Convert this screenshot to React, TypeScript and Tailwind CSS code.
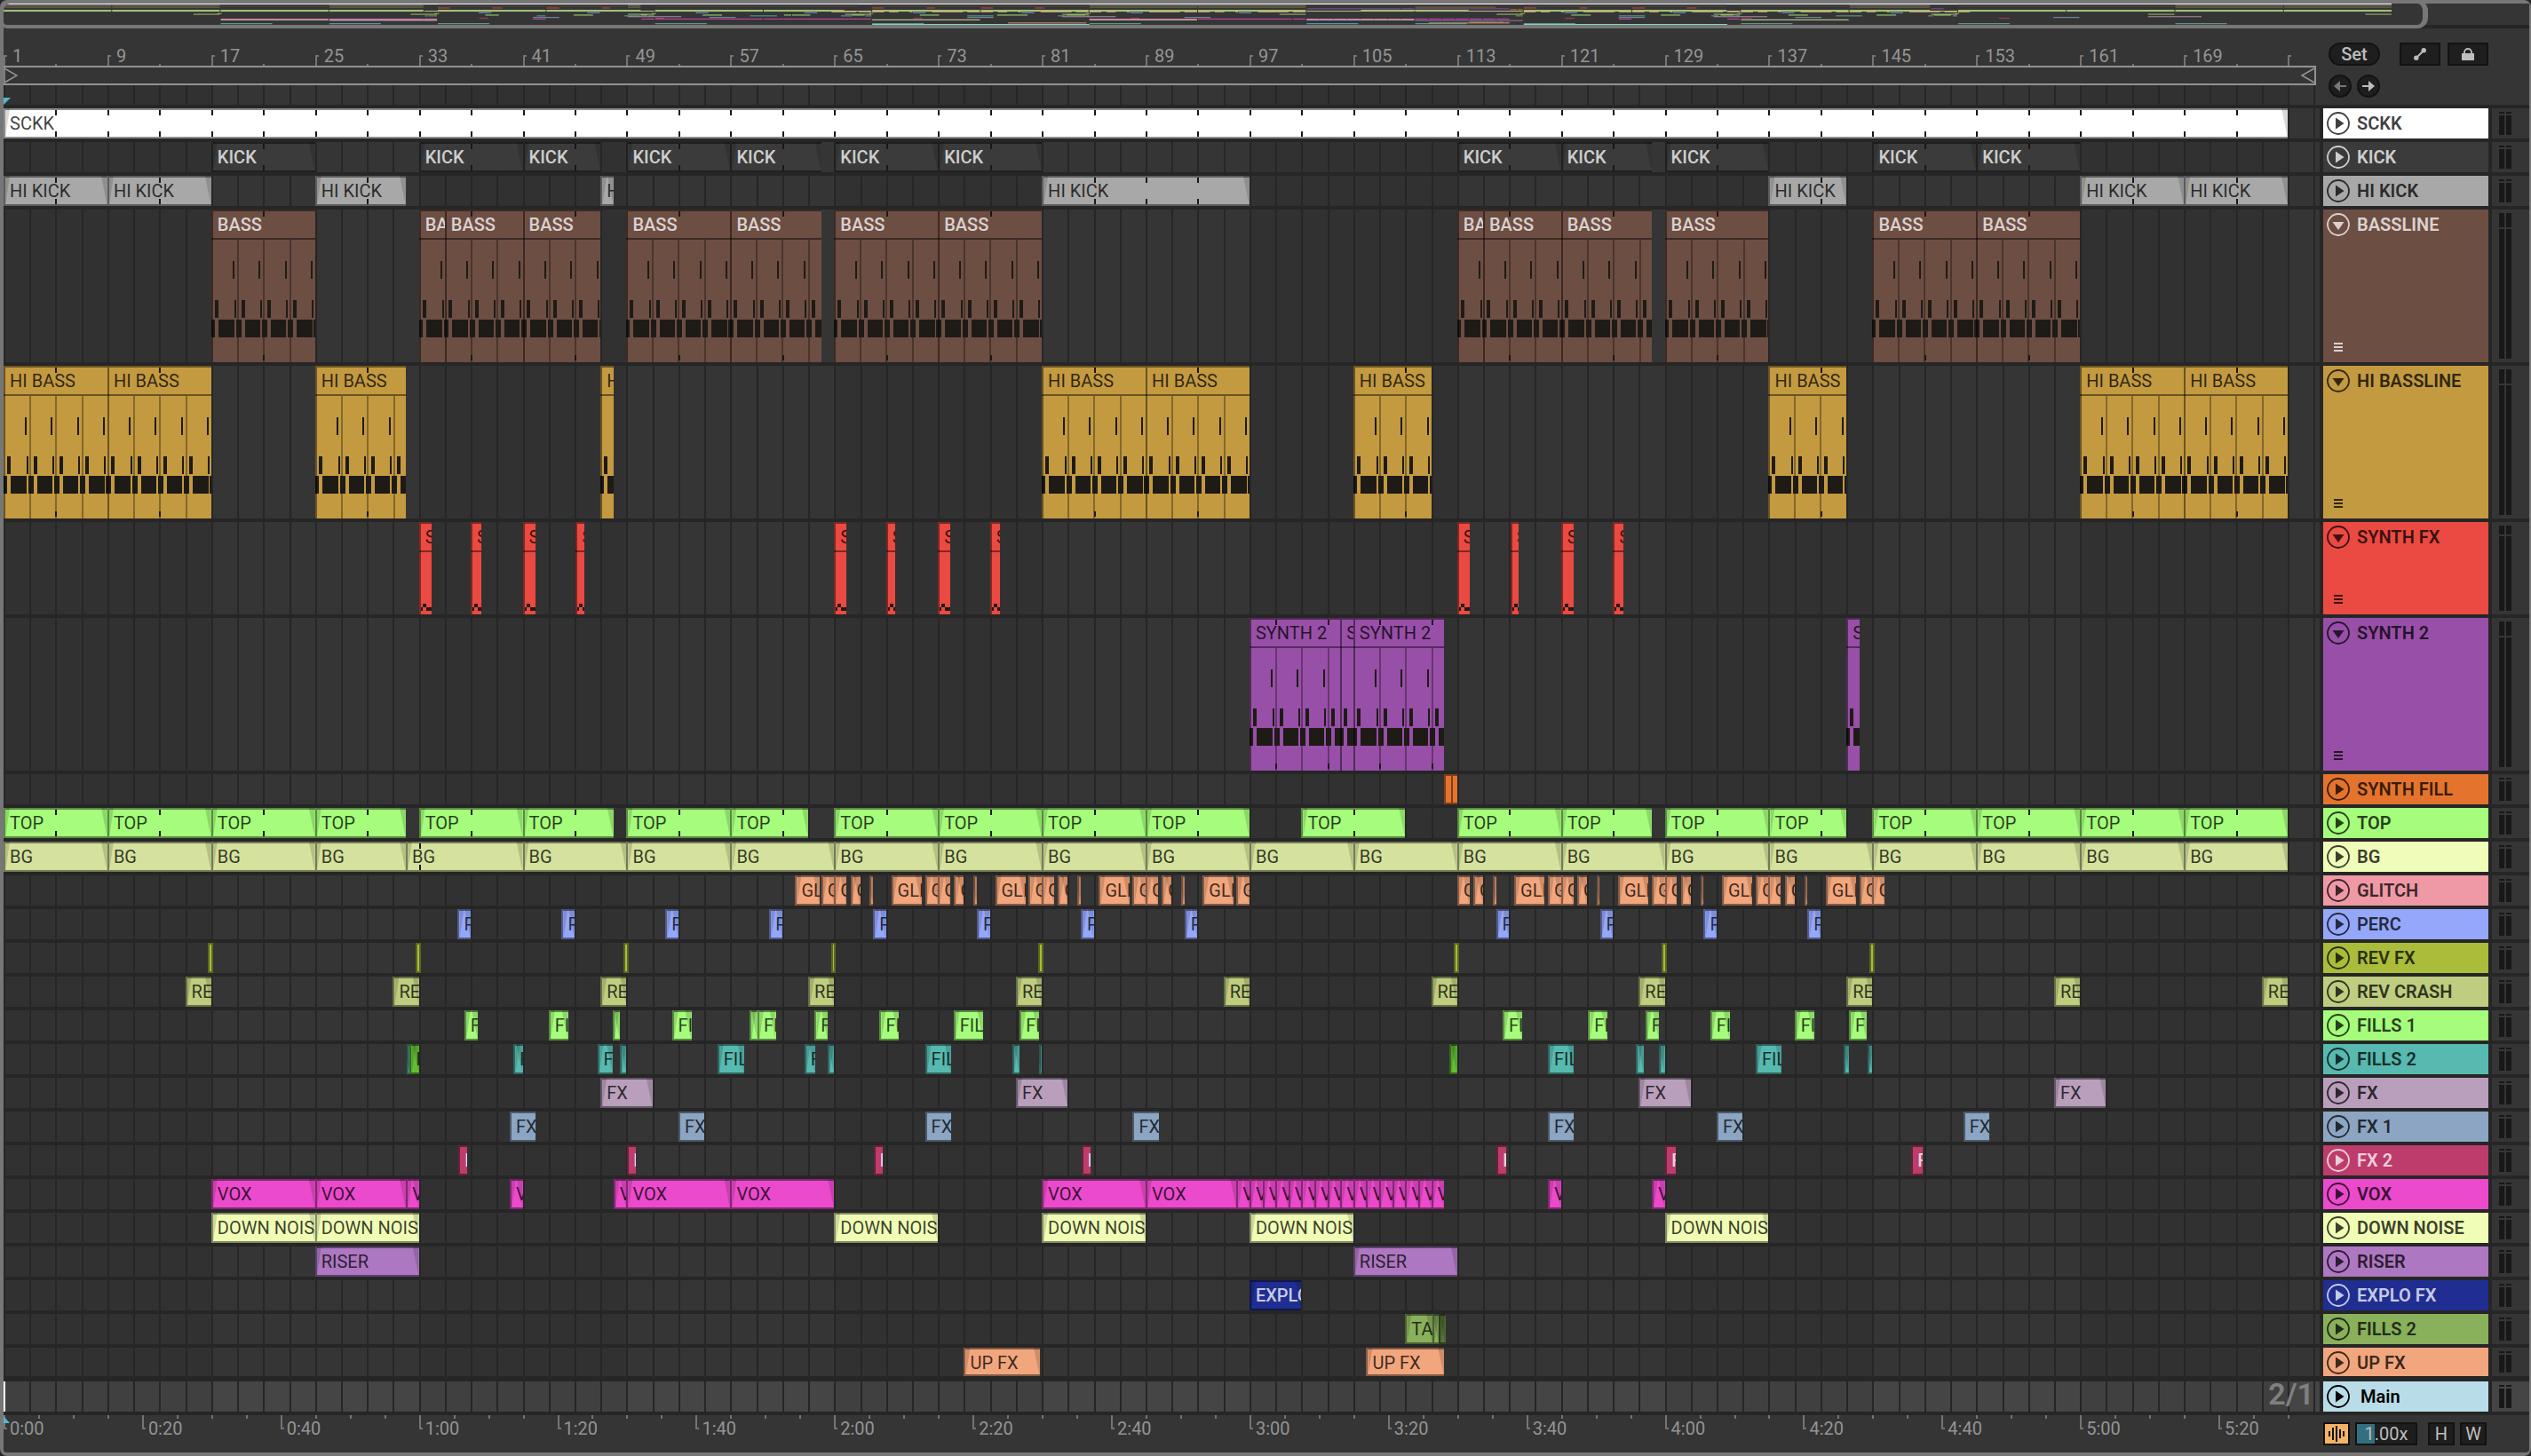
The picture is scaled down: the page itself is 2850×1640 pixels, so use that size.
import React from 'react';

type Clip = { start: number; end: number; label?: string; color?: string; tick?: number };

type Track = {
  name: string;
  color: string;
  clipColor?: string;
  label?: string;
  light?: boolean;
  height?: string;
  kind?: 'midi' | 'hits' | 'plain';
  meter?: string;
  ticks?: number;
  noFade?: boolean;
  clips: Clip[];
};

// number of bars that fit in the visible lane
const VISIBLE_BARS = 178.46;
const SECONDS_PER_BAR = 1.875;

const pct = (bars: number) => `${(bars / VISIBLE_BARS) * 100}%`;
const at = (bar: number) => pct(bar - 1);

const range = (from: number, to: number, step: number) => {
  const out: number[] = [];
  for (let i = from; i <= to; i += step) out.push(i);
  return out;
};

const c = (...pairs: number[][]): Clip[] => pairs.map(([start, end]) => ({ start, end }));
const every = (starts: number[], from: number, to: number): Clip[] =>
  starts.map((s) => ({ start: s + from, end: s + to }));

const glitchBases = [65, 73, 81, 89, 97, 113, 121, 129, 137, 145];
const glitchClips: Clip[] = glitchBases.flatMap((b) => {
  const list: Clip[] = [];
  if (b === 65) list.push({ start: 62, end: 63.9 });
  else if (b !== 113) list.push({ start: b - 3.6, end: b - 1.25 });
  if (b !== 113) list.push({ start: b - 1, end: b });
  if (b !== 97) list.push({ start: b, end: b + 0.95 });
  if (b !== 97 && b !== 145) {
    list.push({ start: b + 1.25, end: b + 2 });
    list.push({ start: b + 2.75, end: b + 3 });
  }
  return list;
});

const sections = [17, 33, 49, 65, 81, 113, 129, 145];
const GREEN = '#62be36';

const tracks: Track[] = [
  { name: 'SCKK', color: '#ffffff', ticks: 1, clips: c([1, 177]) },
  {
    name: 'KICK', color: '#3b3b3b', light: true, ticks: 1,
    clips: c([17, 25], [33, 41], [41, 47], [49, 57], [57, 64], [65, 73], [73, 81], [113, 121], [121, 128], [129, 137], [145, 153], [153, 161]),
  },
  {
    name: 'HI KICK', color: '#a8a8a8', ticks: 1,
    clips: c([1, 9], [9, 17], [25, 32], [47, 48], [81, 97], [137, 143], [161, 169], [169, 177]),
  },
  {
    name: 'BASSLINE', label: 'BASS', color: '#6d4e43', light: true, height: 'h-[172px]', kind: 'midi', meter: 'h-4', ticks: 1,
    clips: c([17, 25], [33, 35], [35, 41], [41, 47], [49, 57], [57, 64], [65, 73], [73, 81], [113, 115], [115, 121], [121, 128], [129, 137], [145, 153], [153, 161]),
  },
  {
    name: 'HI BASSLINE', label: 'HI BASS', color: '#c39a40', height: 'h-[172px]', kind: 'midi', meter: 'h-4', ticks: 1,
    clips: c([1, 9], [9, 17], [25, 32], [47, 48], [81, 89], [89, 97], [105, 111], [137, 143], [161, 169], [169, 177]),
  },
  {
    name: 'SYNTH FX', color: '#ea4a41', height: 'h-[104px]', kind: 'hits', meter: 'h-2.5',
    clips: c([33, 33.95], [37, 37.8], [41, 42], [45.1, 45.75], [65, 65.95], [69, 69.7], [73, 73.95], [77, 77.75], [113, 114], [117.1, 117.75], [121, 122], [125, 125.8]),
  },
  {
    name: 'SYNTH 2', color: '#984fa7', height: 'h-[172px]', kind: 'midi', meter: 'h-4', ticks: 3,
    clips: c([97, 104], [104, 105], [105, 112], [143, 144]),
  },
  { name: 'SYNTH FILL', label: ' ', color: '#e4742d', noFade: true, clips: c([112, 112.55], [112.55, 113]) },
  {
    name: 'TOP', color: '#a5fd7b', ticks: 1,
    clips: c([1, 9], [9, 17], [17, 25], [25, 32], [33, 41], [41, 48], [49, 57], [57, 63], [65, 73], [73, 81], [81, 89], [89, 97], [101, 109], [113, 121], [121, 128], [129, 137], [137, 143], [145, 153], [153, 161], [161, 169], [169, 177]),
  },
  {
    name: 'BG', color: '#f0fdb9', clipColor: '#d4e29d',
    clips: [...every(range(1, 17, 8), 0, 8), { start: 25, end: 32 }, { start: 32, end: 41, tick: 33 }, ...every(range(41, 169, 8), 0, 8)],
  },
  { name: 'GLITCH', color: '#ef99a6', clipColor: '#f2a67d', clips: glitchClips },
  { name: 'PERC', color: '#95a7fb', clips: every([36, 44, 52, 60, 68, 76, 84, 92, 116, 124, 132, 140], 0, 1) },
  { name: 'REV FX', color: '#aabc3a', kind: 'plain', clips: every(sections, -0.25, 0.15) },
  { name: 'REV CRASH', color: '#becd7f', clips: every(range(17, 177, 16), -2, 0) },
  {
    name: 'FILLS 1', color: '#a5fd7b',
    clips: c([36.5, 37.55], [43, 44.5], [47.95, 48.5], [52.5, 54], [58.5, 59.1], [59.1, 60.5], [63.5, 64.5], [68.5, 70], [74.2, 76.5], [79.3, 80.8], [116.5, 118], [123.1, 124.6], [127.5, 128.55], [132.5, 134], [139, 140.5], [143.2, 144.55]),
  },
  {
    name: 'FILLS 2', color: '#57b9af',
    clips: [
      ...c([32.05, 32.3]),
      { start: 32.3, end: 33, color: GREEN },
      ...c([40.3, 41], [46.75, 47.95], [48.5, 49], [56, 58.05], [62.7, 63.55], [64.5, 65], [72, 74], [78.7, 79.3], [80.8, 81]),
      { start: 112.4, end: 113, color: GREEN },
      ...c([120, 122], [126.8, 127.4], [128.55, 129], [136, 138], [142.8, 143.2], [144.6, 145]),
    ],
  },
  { name: 'FX', color: '#b99fbc', clips: c([47, 51], [79, 83], [127, 131], [159, 163]) },
  { name: 'FX 1', color: '#8ba5c2', noFade: true, clips: every([40, 53, 72, 88, 120, 133, 152], 0, 2) },
  {
    name: 'FX 2', color: '#bd3c6c', light: true, noFade: true,
    clips: c([36.05, 36.75], [49.05, 49.75], [68.05, 68.75], [84.05, 84.75], [116.05, 116.8], [129.05, 129.85], [148, 148.85]),
  },
  {
    name: 'VOX', color: '#eb4acd',
    clips: [...c([17, 25], [25, 32], [32, 33], [40, 41], [48, 49], [49, 57], [57, 65], [81, 89], [89, 96]), ...every(range(96, 111, 1), 0, 1), ...c([120, 121], [128, 129])],
  },
  { name: 'DOWN NOISE', color: '#f0fdb5', clips: every([17, 25, 65, 81, 97, 129], 0, 8) },
  { name: 'RISER', color: '#ad77c1', clips: c([25, 33], [105, 113]) },
  { name: 'EXPLO FX', color: '#202d91', light: true, clips: c([97, 101]) },
  {
    name: 'FILLS 2', label: 'TA', color: '#89b05b',
    clips: [...c([109, 111.1], [111.1, 111.6]), { start: 111.6, end: 112.1, color: '#56733a' }],
  },
  { name: 'UP FX', color: '#f2a67d', height: 'h-8', clips: c([75, 80.85], [106, 112]) },
];

const Grid = ({ bright }: { bright?: boolean }) => (
  <div className="absolute inset-0 overflow-hidden">
    {range(1, 177, 16).map((bar, i) => (
      <div
        key={bar}
        className={`absolute inset-y-0 ${i % 2 ? (bright ? 'bg-[#454545]' : 'bg-[#353535]') : bright ? 'bg-[#404040]' : 'bg-[#313131]'}`}
        style={{ left: at(bar), width: pct(16) }}
      />
    ))}
    {range(1, 179, 2).map((bar) => (
      <div key={bar} className="absolute inset-y-0 w-0.5 bg-[#262626]" style={{ left: at(bar) }} />
    ))}
  </div>
);

const inside = (clip: Clip, first: number, step: number) =>
  range(first, 177, step).filter((b) => b > clip.start + 0.1 && b < clip.end - 0.1);

const MidiNotes = ({ clip }: { clip: Clip }) => {
  const length = clip.end - clip.start;
  const x = (b: number) => `${(b / length) * 100}%`;
  return (
    <svg className="absolute inset-0 h-full w-full" shapeRendering="crispEdges" fill="#1e1b17">
      {inside(clip, 1, 2).map((b) => (
        <rect key={b} x={x(b - clip.start)} y="34" width="2" height="138" fill="#000" opacity="0.32" />
      ))}
      {range(0, length - 0.1, 2).map((b) => (
        <g key={b}>
          <rect x={x(b + 1.66)} y="58" width="2" height="20" />
          <rect x={x(b + 0.3)} y="102" width="4" height="20" />
          <rect x={x(b + 1.76)} y="102" width="2" height="20" />
          <rect x={x(b)} y="124" width={x(0.3)} height="20" />
          <rect x={x(b + 0.57)} y="124" width={x(1.2)} height="20" />
          <rect x={x(b + 1.9)} y="124" width={x(0.12)} height="20" />
        </g>
      ))}
    </svg>
  );
};

const HitNotes = () => (
  <svg className="absolute inset-0 h-full w-full" shapeRendering="crispEdges" fill="#1e1b17">
    <rect x="2" y="96" width="2" height="4" />
    <rect x="4" y="92" width="4" height="4" />
    <rect x="8" y="96" width="20" height="4" />
  </svg>
);

const ClipView = ({ clip, track }: { clip: Clip; track: Track }) => {
  const length = clip.end - clip.start;
  const tall = track.kind === 'midi' || track.kind === 'hits';
  const tiny = length < 0.64;
  const ticks = clip.tick ? [clip.tick] : track.ticks ? inside(clip, track.ticks, 4) : [];
  return (
    <div
      className="absolute inset-y-0 overflow-hidden"
      style={{ left: at(clip.start), width: pct(length), backgroundColor: clip.color || track.clipColor || track.color }}
    >
      {track.kind === 'midi' && <MidiNotes clip={clip} />}
      {track.kind === 'hits' && <HitNotes />}
      {!tall && !track.noFade && track.kind !== 'plain' && (
        <>
          <div className="absolute inset-y-0 left-0.5 w-[5px] bg-black/15 [clip-path:polygon(0_0,100%_0,0_100%)]" />
          <div className="absolute inset-y-0 right-0 w-[7px] bg-black/15 [clip-path:polygon(0_0,100%_0,100%_100%)]" />
        </>
      )}
      {ticks.map((b) => (
        <div
          key={b}
          className="absolute inset-y-0.5 w-0.5 border-y-6 border-[#1c1717]"
          style={{ left: `${((b - clip.start) / length) * 100}%` }}
        />
      ))}
      <div
        className={`absolute inset-0 border-l-2 border-t-2 border-black/45 ${tall ? '' : 'border-b-2'} ${track.kind === 'plain' ? 'border-r-2' : ''}`}
      />
      {tall && <div className="absolute inset-x-0 top-8 h-0.5 bg-black/45" />}
      {!tiny && (
        <span
          className={`relative block whitespace-nowrap pl-[7px] text-[20px] leading-[34px] ${track.light ? 'font-medium text-white/75' : 'text-black/75'}`}
        >
          {track.label || track.name}
        </span>
      )}
    </div>
  );
};

const FoldButton = ({ name, open }: { name: string; open?: boolean }) => (
  <button type="button" aria-label={`Fold ${name}`} className="h-[26px] w-[26px] shrink-0">
    <svg viewBox="0 0 26 26" className="h-full w-full" fill="currentColor">
      <circle cx="13" cy="13" r="12" fill="none" stroke="currentColor" strokeWidth="1.8" />
      {open ? <path d="M6.5 10h13L13 19z" /> : <path d="M10 6.5v13L19.5 13z" />}
    </svg>
  </button>
);

const Meter = ({ peak = 'h-0.5', main }: { peak?: string; main?: boolean }) => (
  <div className={`flex w-[42px] shrink-0 gap-0.5 py-1 pl-2 ${main ? 'bg-[#454545]' : 'bg-[#353535]'}`}>
    {[0, 1].map((i) => (
      <div key={i} className="flex w-1.5 flex-col gap-0.5">
        <div className={`bg-[#181818] ${peak}`} />
        <div className="flex-1 bg-[#181818]" />
      </div>
    ))}
  </div>
);

const TrackRow = ({ track }: { track: Track }) => {
  const open = track.kind === 'midi' || track.kind === 'hits';
  return (
    <div className={`flex gap-1 ${track.height || 'h-[34px]'}`}>
      <div className="relative min-w-0 flex-1 overflow-hidden">
        <Grid />
        {track.clips.map((clip) => (
          <ClipView key={clip.start} clip={clip} track={track} />
        ))}
      </div>
      <div
        className={`flex w-[186px] shrink-0 flex-col justify-between ${track.light ? 'text-white/75' : 'text-black/75'}`}
        style={{ backgroundColor: track.color }}
      >
        <div className="flex items-center gap-2 pl-1 pt-1">
          <FoldButton name={track.name} open={open} />
          <span className="whitespace-nowrap text-[20px] font-semibold leading-[26px]">{track.name}</span>
        </div>
        {open && (
          <div className="mb-3 ml-3 flex w-2.5 flex-col gap-0.5">
            <div className="h-0.5 bg-current" />
            <div className="h-0.5 bg-current" />
            <div className="h-0.5 bg-current" />
          </div>
        )}
      </div>
      <Meter peak={track.meter} />
    </div>
  );
};

// whole song in miniature, one line per track
const Overview = () => {
  const scale = 15.284;
  return (
    <svg viewBox="0 0 2844 27" preserveAspectRatio="none" className="block h-6 w-full">
      {tracks.map((track, row) =>
        track.clips.map((clip) => (
          <rect
            key={`${row}-${clip.start}`}
            x={(clip.start - 1) * scale}
            y={row}
            width={Math.max((clip.end - clip.start) * scale - 1, 3)}
            height="1.2"
            fill={clip.color || track.clipColor || track.color}
            opacity={row === 0 ? 1 : row < 5 ? 0.5 : 0.8}
          />
        ))
      )}
      {[17, 25, 33, 49, 65, 81, 97, 105, 113, 129, 145, 161].map((b) => (
        <rect key={b} x={(b - 1) * scale} y="25" width={scale * 3.8} height="1.1" fill="#6fae9f" />
      ))}
      <rect x={64 * scale} y="26" width={16 * scale} height="1" fill="#84e6d4" />
      <rect x={112 * scale} y="26" width={15 * scale} height="1" fill="#84e6d4" />
    </svg>
  );
};

const BarRuler = () => (
  <div className="relative h-[42px] overflow-hidden text-[#949494]">
    {range(1, 177, 8).map((bar) => (
      <div key={bar} className="absolute bottom-0 h-3 w-1 border-l-2 border-t-2 border-[#747474]" style={{ left: at(bar) }} />
    ))}
    {range(5, 173, 8).map((bar) => (
      <div key={bar} className="absolute bottom-0 h-0.5 w-0.5 bg-[#747474]" style={{ left: at(bar) }} />
    ))}
    {range(1, 169, 8).map((bar) => (
      <span key={bar} className="absolute bottom-0 pl-2.5 text-[20px] leading-[22px]" style={{ left: at(bar) }}>
        {bar}
      </span>
    ))}
  </div>
);

const formatTime = (s: number) => `${Math.floor(s / 60)}:${String(s % 60).padStart(2, '0')}`;

const TimeRuler = () => (
  <div className="relative min-w-0 flex-1 overflow-hidden text-[#949494]">
    {range(0, 330, 5).map((s) => (
      <div
        key={s}
        className={`absolute top-0 border-l-2 border-[#747474] ${s % 20 ? 'h-1 w-0.5' : 'h-4 w-1 border-b-2'}`}
        style={{ left: pct(s / SECONDS_PER_BAR) }}
      />
    ))}
    {range(0, 320, 20).map((s) => (
      <span key={s} className="absolute top-1 pl-[7px] text-[20px] leading-[22px]" style={{ left: pct(s / SECONDS_PER_BAR) }}>
        {formatTime(s)}
      </span>
    ))}
    <svg className="absolute left-0 top-0 h-2.5 w-2" fill="#53b8d0">
      <path d="M0 1v8h7z" />
    </svg>
  </div>
);

const box = 'flex items-center justify-center border-2 border-[#121212] bg-[#1e1e1e] text-[#bdbdbd]';

const App: React.FC = () => {
  return (
    <div className="flex min-h-screen flex-col bg-[#262626] font-[Roboto,'Liberation_Sans',sans-serif]">
      <div className="relative flex flex-1 flex-col rounded-lg border-4 border-r-2 border-[#777777]">
        <div className="h-7 bg-[#353535]">
          <Overview />
          <div className="h-1 bg-[#262626]" />
        </div>
        <div className="absolute -left-1 -top-1 h-8 w-[96.13%] rounded-xl rounded-bl-lg border-4 border-r-[6px] border-[#777777]" />

        {/* Ruler and controls */}
        <div className="flex gap-1 bg-[#353535]">
          <div className="min-w-0 flex-1">
            <BarRuler />
            <div className="mr-1 flex h-[22px] items-center justify-between border-y-2 border-r-2 border-[#929292] text-[#929292]">
              <svg className="h-[18px] w-4" fill="none" stroke="currentColor" strokeWidth="1.6">
                <path d="M1 0v18M1 1l14 8-14 8" />
              </svg>
              <svg className="h-[18px] w-4" fill="none" stroke="currentColor" strokeWidth="1.6">
                <path d="M16 1L2 9l14 8" />
              </svg>
            </div>
            <div className="relative h-[22px]">
              <Grid />
              <svg className="absolute bottom-0 left-0 h-2 w-2" fill="#53b8d0">
                <path d="M0 0h8L0 8z" />
              </svg>
            </div>
          </div>
          <div className="w-[186px] shrink-0 pl-1.5 pt-4">
            <div className="flex">
              <button type="button" className={`${box} h-[26px] w-[58px] rounded-full text-[20px] font-medium leading-none`}>
                Set
              </button>
              <button type="button" aria-label="Automation mode" className={`${box} ml-auto h-[26px] w-[46px]`}>
                <svg viewBox="0 0 14 14" className="h-3.5 w-3.5" fill="currentColor">
                  <path d="M3 11l8-8" stroke="currentColor" strokeWidth="2" />
                  <circle cx="2.8" cy="11.2" r="2.7" />
                  <circle cx="11.2" cy="2.8" r="2.7" />
                </svg>
              </button>
              <button type="button" aria-label="Lock envelopes" className={`${box} ml-2 h-[26px] w-[46px]`}>
                <svg viewBox="0 0 14 14" className="h-3.5 w-3.5" fill="currentColor">
                  <path d="M0 6h14v8H0z" />
                  <path d="M3 7V5a4 4 0 018 0v2" fill="none" stroke="currentColor" strokeWidth="1.8" />
                </svg>
              </button>
            </div>
            <div className="mt-2.5 flex gap-1.5">
              <button type="button" aria-label="Previous locator" className={`${box} h-[26px] w-[26px] rounded-full`}>
                <svg viewBox="0 0 14 12" className="h-3 w-3.5 shrink-0 text-[#777777]" fill="currentColor">
                  <path d="M0 6l7-6v12z" />
                  <path d="M6 5h8v2H6z" />
                </svg>
              </button>
              <button type="button" aria-label="Next locator" className={`${box} h-[26px] w-[26px] rounded-full`}>
                <svg viewBox="0 0 14 12" className="h-3 w-3.5 shrink-0" fill="currentColor">
                  <path d="M14 6L7 0v12z" />
                  <path d="M0 5h8v2H0z" />
                </svg>
              </button>
            </div>
          </div>
          <div className="w-[42px] shrink-0" />
        </div>

        {/* Tracks */}
        <div className="flex flex-col gap-1 pt-1">
          {tracks.map((track, i) => (
            <TrackRow key={i} track={track} />
          ))}
        </div>

        {/* Main */}
        <div className="mt-1.5 flex h-[34px] gap-1">
          <div className="relative min-w-0 flex-1">
            <Grid bright />
            <div className="absolute inset-y-0 left-0 w-0.5 bg-white" />
            <span className="absolute inset-y-0 right-1.5 text-[34px] font-semibold leading-[28px] text-[#808080]">2/1</span>
          </div>
          <div className="flex w-[186px] shrink-0 items-center gap-3 bg-[#b9dde8] pl-1 text-black">
            <FoldButton name="Main" />
            <span className="text-[20px] font-semibold leading-[26px]">Main</span>
          </div>
          <Meter main />
        </div>

        <div className="mt-1 flex min-h-[42px] flex-1 gap-1 rounded-b bg-[#353535]">
          <TimeRuler />
          <div className="flex w-[186px] shrink-0 items-start pt-2">
            <button type="button" aria-label="Waveform view" className="flex h-[26px] w-[30px] items-center justify-center border-2 border-[#121212] bg-[#f4b266]">
              <svg viewBox="0 0 18 18" className="h-[18px] w-[18px]" shapeRendering="crispEdges">
                <path d="M0 6h2v6H0zM4 2h2v14H4zM8 0h2v18H8zM12 4h2v10h-2zM16 6h2v6h-2z" fill="#121212" />
              </svg>
            </button>
            <input
              aria-label="Waveform zoom"
              defaultValue="1.00x"
              className="ml-1.5 h-[26px] w-[70px] border-2 border-[#121212] bg-[linear-gradient(to_right,#33707f_20px,#1e1e1e_20px)] text-center text-[20px] leading-none text-[#bdbdbd]"
            />
            <button type="button" className={`${box} ml-3 h-[26px] w-[30px] text-[20px] leading-none`}>
              H
            </button>
            <button type="button" className={`${box} ml-1.5 h-[26px] w-[30px] text-[20px] leading-none`}>
              W
            </button>
          </div>
          <div className="w-[42px] shrink-0" />
        </div>
      </div>
    </div>
  );
};

export default App;
